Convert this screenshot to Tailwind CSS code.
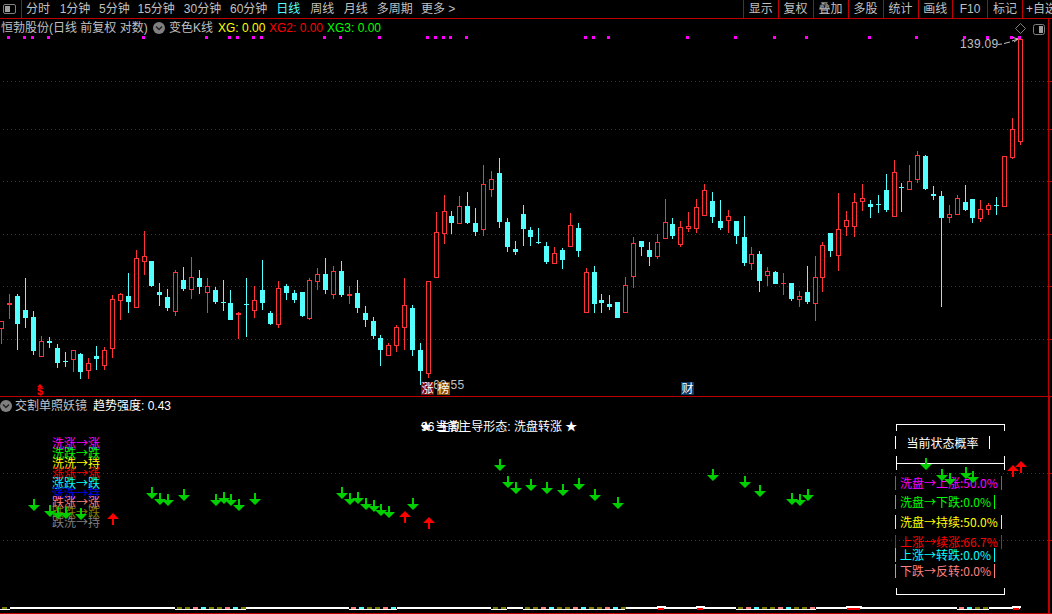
<!DOCTYPE html>
<html lang="zh-CN">

<head>
    <meta charset="UTF-8">
    <title>恒勃股份 日线</title>
    <script src="https://cdn.jsdelivr.net/npm/@tailwindcss/browser@4"></script>
</head>

<body class="bg-black">
    <div class="w-[1052px] h-[614px] bg-black overflow-hidden flex flex-col text-[12px] leading-none text-[#c0c0c0] font-['Liberation_Sans','Noto_Sans_CJK_SC',sans-serif]">

        <!-- toolbar -->
        <div class="h-[19px] shrink-0 flex items-stretch justify-between border-b border-[#c00000]">
            <div class="flex items-center">
                <div class="w-[22px] h-[18px] flex items-center border-r border-[#c00000]">
                    <div class="ml-[3px] w-[13px] h-[10px] rounded-[2px] border border-[#808080] flex justify-start p-px">
                        <div class="w-[5px] bg-[#a0a0a0]"></div>
                    </div>
                </div>
                <div class="flex items-center pl-[4px] whitespace-nowrap">
                    <span class="w-[33.7px]">分时</span>
                    <span class="w-[39.3px]">1分钟</span>
                    <span class="w-[38.5px]">5分钟</span>
                    <span class="w-[46.3px]">15分钟</span>
                    <span class="w-[46.2px]">30分钟</span>
                    <span class="w-[46.4px]">60分钟</span>
                    <span class="w-[33.9px] text-[#54ffff]">日线</span>
                    <span class="w-[33.5px]">周线</span>
                    <span class="w-[32.9px]">月线</span>
                    <span class="w-[44.3px]">多周期</span>
                    <span>更多 &gt;</span>
                </div>
            </div>
            <div class="flex items-stretch whitespace-nowrap">
                <span class="w-[34.5px] flex items-center justify-center border-l border-[#c00000]">显示</span>
                <span class="w-[35px] flex items-center justify-center border-l border-[#c00000]">复权</span>
                <span class="w-[35px] flex items-center justify-center border-l border-[#c00000]">叠加</span>
                <span class="w-[35px] flex items-center justify-center border-l border-[#c00000]">多股</span>
                <span class="w-[35px] flex items-center justify-center border-l border-[#c00000]">统计</span>
                <span class="w-[34.5px] flex items-center justify-center border-l border-[#c00000]">画线</span>
                <span class="w-[35px] flex items-center justify-center border-l border-[#c00000]">F10</span>
                <span class="w-[35px] flex items-center justify-center border-l border-[#c00000]">标记</span>
                <span class="w-[30px] flex items-center pl-[3px] border-l border-[#c00000] overflow-hidden">+自选</span>
            </div>
        </div>

        <!-- main k-line pane -->
        <div class="relative h-[378px] shrink-0 border-b border-[#c00000]">
            <svg id="kline" class="absolute left-0 top-0" width="1052" height="377" viewBox="0 19 1052 377"></svg>

            <div class="relative flex items-center h-[18px] pl-[1px] whitespace-nowrap">
                <span class="w-[146px]">恒勃股份(日线 前复权 对数)</span>
                <svg class="ml-[6px] mr-[4px]" width="12" height="12" viewBox="0 0 12 12">
                    <circle cx="6" cy="6" r="6" fill="#808080" />
                    <path d="M3 4.5 L6 7.5 L9 4.5" fill="none" stroke="#222" stroke-width="1.5" />
                </svg>
                <span class="w-[49px]">变色K线</span>
                <span class="w-[51px] text-[#ffff00]">XG: 0.00</span>
                <span class="w-[58px] text-[#ff0000]">XG2: 0.00</span>
                <span class="text-[#00ff00]">XG3: 0.00</span>
            </div>

            <div class="absolute left-[960px] top-[19px] tracking-[0.3px] whitespace-nowrap">139.09</div>
            <div class="absolute left-[433px] top-[360px] tracking-[0.3px] whitespace-nowrap">63.55</div>

            <div class="absolute left-[421px] top-[363px] w-[13px] h-[13px] bg-[#800808] text-white flex items-center justify-center">涨</div>
            <div class="absolute left-[437px] top-[363px] w-[13px] h-[13px] bg-[#8a5008] text-white flex items-center justify-center">榜</div>
            <div class="absolute left-[681px] top-[363px] w-[13px] h-[13px] bg-[#0a3a66] text-white flex items-center justify-center">财</div>

            <div class="absolute left-[36px] top-[365px] w-[8px] flex flex-col items-center text-[#ff0000]">
                <div class="w-0 h-0 border-x-[3px] border-x-transparent border-b-[3px] border-b-[#ff0000]"></div>
                <div class="text-[11px] font-bold leading-[9px]">$</div>
            </div>
        </div>

        <!-- indicator pane -->
        <div class="relative flex-1 border-b border-[#c00000]">
            <svg id="lower" class="absolute left-0 top-0" width="1052" height="216" viewBox="0 397 1052 216"></svg>

            <div class="relative flex items-center h-[17px] pl-[0px] whitespace-nowrap">
                <svg class="mr-[3px]" width="12" height="12" viewBox="0 0 12 12">
                    <circle cx="6" cy="6" r="6" fill="#808080" />
                    <path d="M3 4.5 L6 7.5 L9 4.5" fill="none" stroke="#222" stroke-width="1.5" />
                </svg>
                <span class="w-[78px]">交割单照妖镜</span>
                <span class="text-white">趋势强度: 0.43</span>
            </div>

            <!-- legend, rows overlap in the original -->
            <div class="absolute left-[52px] top-[41px] flex flex-col leading-[9.9px] whitespace-nowrap font-['Noto_Sans_CJK_SC',sans-serif]">
                <span class="text-[#ff00ff]">洗涨→涨</span>
                <span class="text-[#00ff00]">洗跌→跌</span>
                <span class="text-[#ffff00]">洗洗→持</span>
                <span class="text-[#ff0000]">涨涨→涨</span>
                <span class="text-[#00ffff]">涨跌→跌</span>
                <span class="text-[#0000ff]">涨洗→持</span>
                <span class="text-[#ff8080]">跌涨→涨</span>
                <span class="text-[#808000]">跌跌→跌</span>
                <span class="text-[#808080]">跌洗→持</span>
            </div>

            <!-- two labels printed on top of each other -->
            <div class="absolute left-[420px] top-[24px] text-white whitespace-nowrap">★ 当前主导形态: 洗盘转涨 ★</div>
            <div class="absolute left-[421px] top-[24px] text-white whitespace-nowrap">96 主割</div>

            <!-- probability box -->
            <div class="absolute left-[895px] top-[27px] w-[110px] flex flex-col items-start text-white whitespace-nowrap font-['Noto_Sans_CJK_SC',sans-serif]">
                <div class="ml-px w-[109px] h-[7px] border-t border-x border-white"></div>
                <div class="mt-[5px] h-[13px] flex items-center px-[10.5px] border-x border-white">当前状态概率</div>
                <div class="mt-[7px] ml-px w-[109px] h-[14px] flex items-center border-x border-white">
                    <div class="w-full h-px bg-white"></div>
                </div>
                <div class="mt-[6px] h-[14px] w-[107px] flex items-center pl-[4px] border-x border-[#ff00ff] text-[#ff00ff]">洗盘→上涨:50.0%</div>
                <div class="mt-[5px] h-[14px] w-[100px] flex items-center pl-[4px] border-x border-[#00ff00] text-[#00ff00]">洗盘→下跌:0.0%</div>
                <div class="mt-[6px] h-[14px] w-[107px] flex items-center pl-[4px] border-x border-[#ffff00] text-[#ffff00]">洗盘→持续:50.0%</div>
                <div class="mt-[6px] h-[14px] w-[107px] flex items-center pl-[4px] border-x border-[#ff0000] text-[#ff0000]">上涨→续涨:66.7%</div>
                <div class="mt-[-1px] h-[14px] w-[100px] flex items-center pl-[4px] border-x border-[#00ffff] text-[#00ffff]">上涨→转跌:0.0%</div>
                <div class="mt-[2px] h-[14px] w-[100px] flex items-center pl-[4px] border-x border-[#ff8080] text-[#ff8080]">下跌→反转:0.0%</div>
                <div class="mt-[10px] ml-px w-[109px] h-[7px] border-b border-x border-white"></div>
            </div>

            <svg id="signals" class="absolute left-0 top-0" width="1052" height="216" viewBox="0 397 1052 216"></svg>
        </div>
    </div>

    <script>
        const RED = '#ff3333';
        const CYAN = '#54ffff';

        // [x, wick top, body top, body bottom, wick bottom, r/c] measured on 3x crops
        const left = [
            [4,273,273,296,342,'r'],[28,192,219,225,267,'r'],[52,192,198,282,360,'c'],[76,144,240,264,294,'c'],
            [100,243,261,363,375,'c'],[124,318,333,381,381,'r'],[148,321,333,339,354,'c'],[172,342,354,399,414,'c'],
            [196,366,393,396,411,'c'],[220,360,360,390,426,'r'],[241,369,372,426,447,'c'],[265,384,399,423,447,'r'],
            [289,348,378,387,420,'c'],[313,351,360,408,420,'r'],[337,195,207,357,384,'r'],[361,189,192,213,270,'r'],
            [385,129,198,216,249,'c'],[409,60,84,234,234,'r'],[433,3,78,96,135,'r'],[455,93,93,168,171,'c'],
            [478,159,186,195,228,'c'],[502,177,201,234,243,'c'],[526,120,126,246,258,'r'],[550,111,150,177,183,'c'],
            [574,81,141,180,207,'r'],[598,120,144,171,192,'c'],[622,144,168,189,249,'r'],[646,171,180,216,222,'c'],
            [670,150,216,219,243,'c'],[691,180,219,270,270,'c'],[715,246,249,255,327,'r'],[739,144,222,225,321,'c'],
            [763,168,210,243,264,'r'],[787,90,180,219,240,'c'],[811,243,249,282,285,'c'],[835,153,174,285,294,'r'],
            [859,162,168,189,210,'c'],[883,180,189,210,219,'c']
        ];
        const middle = [
            [7,426,426,498,501,'c'],[28,384,390,507,510,'r'],[52,354,372,396,420,'r'],[76,324,372,420,432,'c'],
            [100,348,363,435,447,'r'],[124,333,363,435,441,'c'],[148,408,432,438,462,'r'],[172,390,429,474,489,'c'],
            [196,468,489,510,531,'c'],[220,501,513,558,567,'c'],[241,555,564,600,648,'c'],[265,579,585,618,618,'r'],
            [289,525,531,588,606,'r'],[313,384,465,534,600,'r'],[337,465,474,600,618,'c'],[361,579,600,663,705,'c'],
            [385,393,393,672,684,'r'],[409,186,246,384,384,'r'],[433,135,183,252,282,'r'],[454,183,198,219,252,'c'],
            [478,138,168,222,222,'r'],[502,126,168,219,222,'c'],[526,174,219,246,258,'c'],[550,45,102,240,258,'r'],
            [574,63,87,120,141,'r'],[598,24,69,216,234,'c'],[622,204,216,291,306,'c'],[646,273,297,306,315,'c'],
            [670,165,192,237,288,'c'],[691,231,240,261,288,'c'],[715,234,276,279,282,'c'],[739,276,288,336,342,'c'],
            [763,291,309,342,342,'r'],[787,294,300,330,357,'c'],[811,189,225,291,291,'r'],[835,219,234,303,321,'c'],
            [859,354,366,489,489,'r'],[883,348,366,462,489,'c']
        ];
        const right = [
            [4,432,450,459,489,'c'],[28,435,462,471,480,'c'],[52,456,456,504,504,'c'],[76,381,405,489,489,'r'],
            [100,261,279,381,414,'r'],[124,273,273,291,318,'c'],[148,276,300,321,348,'c'],[172,252,276,321,327,'r'],
            [196,147,216,267,267,'r'],[217,204,222,258,267,'c'],[241,213,231,285,291,'r'],[265,186,228,237,246,'r'],
            [289,147,171,237,249,'r'],[313,102,120,198,198,'r'],[337,126,153,201,219,'c'],[361,150,213,234,240,'c'],
            [385,180,198,213,249,'r'],[409,213,213,258,282,'c'],[433,198,261,339,348,'c'],[454,291,312,342,360,'r'],
            [478,303,312,393,426,'c'],[502,351,363,378,408,'r'],[526,363,366,402,402,'c'],[550,369,399,402,435,'r'],
            [574,399,399,447,453,'c'],[598,423,438,450,471,'r'],[622,348,426,456,462,'c'],[646,318,381,462,513,'r'],
            [667,276,285,384,426,'r'],[691,249,249,303,321,'c'],[715,129,237,318,363,'r'],[739,183,210,231,258,'r'],
            [763,129,156,231,261,'r'],[787,102,144,156,183,'r'],[811,150,162,171,204,'c'],[835,135,162,165,189,'c'],
            [859,72,120,180,186,'c'],[883,30,66,201,201,'r'],[904,99,111,114,186,'c'],[928,45,93,120,120,'r'],
            [952,3,15,90,99,'r'],[976,15,18,117,120,'c'],[1000,108,132,138,150,'c'],[1024,123,138,204,471,'c'],
            [1048,165,192,204,219,'r'],[1072,135,144,195,195,'r'],[1096,105,156,180,183,'c'],[1117,147,147,204,219,'c'],
            [1141,150,177,207,216,'r'],[1165,159,165,180,195,'r'],[1189,141,165,168,195,'c'],[1213,18,18,171,171,'r']
        ];
        // last two candles come from the crop at (900,20)
        const last = [[337,294,327,414,417,'r'],[361,57,57,366,375,'r']];

        function candle(ox, oy, c) {
            const x = Math.floor(ox + c[0] / 3);
            const y = v => Math.round(oy + v / 3);
            const color = c[5] === 'r' ? RED : CYAN;
            const top = y(c[1]), bt = y(c[2]), bb = y(c[3]), low = y(c[4]);
            let s = '';
            if (bt > top) s += `<rect x="${x}" y="${top}" width="1" height="${bt - top}" fill="${color}"/>`;
            if (low > bb) s += `<rect x="${x}" y="${bb}" width="1" height="${low - bb}" fill="${color}"/>`;
            if (c[5] === 'c' || bb - bt < 3) {
                s += `<rect x="${x - 2}" y="${bt}" width="5" height="${Math.max(bb - bt, 1)}" fill="${color}"/>`;
            } else {
                s += `<rect x="${x - 1.5}" y="${bt + 0.5}" width="4" height="${bb - bt - 1}" fill="#000" stroke="${color}"/>`;
            }
            return s;
        }

        function dotted(y) {
            return `<line x1="3" x2="1048" y1="${y + 0.5}" y2="${y + 0.5}" stroke="#8c1010" stroke-dasharray="1 3"/>`
                + `<rect x="1049" y="${y}" width="3" height="1" fill="#c00000"/>`;
        }

        function arrow(x, y, color, up) {
            const pts = up
                ? [[x, y], [x + 6, y + 6], [x + 1, y + 6], [x + 1, y + 12], [x - 1, y + 12], [x - 1, y + 6], [x - 6, y + 6]]
                : [[x - 1, y], [x + 1, y], [x + 1, y + 6], [x + 6, y + 6], [x, y + 12], [x - 6, y + 6], [x - 1, y + 6]];
            return `<polygon points="${pts.map(p => p.join(',')).join(' ')}" fill="${color}"/>`;
        }

        // main pane
        let k = '<g shape-rendering="crispEdges">';
        [81, 129, 181, 234, 286, 339].forEach(y => k += dotted(y));
        k += '<rect x="1048" y="19" width="1" height="377" fill="#c00000"/>';
        left.forEach(c => k += candle(0, 230, c));
        middle.forEach(c => k += candle(300, 150, c));
        right.forEach(c => k += candle(600, 150, c));
        last.forEach(c => k += candle(900, 20, c));
        [8, 24, 32, 48, 143, 206, 229, 237, 253, 261, 324, 340, 379, 427, 435, 443, 450, 466, 585, 593, 608, 687, 735, 774, 806, 869, 916, 964, 987, 1011, 1019]
            .forEach(x => k += `<rect x="${x - 1}" y="36" width="3" height="3" fill="#ff00ff"/>`);
        k += '</g>';
        k += '<path d="M1020.5 23.5 L1025.5 28.5 L1020.5 33.5 L1015.5 28.5 Z" fill="none" stroke="#808080"/>';
        k += '<rect x="1033.5" y="24.5" width="11" height="10" rx="2" fill="none" stroke="#808080"/>';
        k += '<rect x="1039" y="26" width="4" height="7" fill="#a0a0a0"/>';
        k += '<path d="M998 44.5 L1002 44 M1004 43.5 L1010 42 M1012 41 L1018 39 M1013 37.5 L1018 39 L1014 42" fill="none" stroke="#c0c0c0"/>';
        document.getElementById('kline').innerHTML = k;

        // lower pane: grid and the volume strip at the bottom
        let l = '<g shape-rendering="crispEdges">';
        [473, 540].forEach(y => l += dotted(y));
        l += '<rect x="1048" y="397" width="2" height="216" fill="#c00000"/>';
        l += '<rect x="0" y="607" width="1020" height="2" fill="#fff"/>';
        [[0, 10], [175, 246], [349, 397], [491, 507], [523, 625], [736, 816], [957, 989]].forEach(seg => {
            l += `<rect x="${seg[0]}" y="607" width="${seg[1] - seg[0]}" height="3" fill="#000"/>`;
            l += `<rect x="${seg[0]}" y="609" width="${seg[1] - seg[0]}" height="1" fill="#fff"/>`;
            for (let x = seg[0] + 2, i = 0; x < seg[1] - 3; x += 8, i++) {
                const color = ['#808000', '#ff8080', '#54ffff', '#808000'][(i + seg[0]) % 4];
                l += `<rect x="${x}" y="607" width="5" height="2" fill="${color}"/>`;
            }
        });
        [[657, 666], [696, 705], [846, 862], [1012, 1021]].forEach(seg => {
            l += `<rect x="${seg[0]}" y="606" width="${seg[1] - seg[0]}" height="2" fill="#fff"/>`;
            l += `<rect x="${seg[0] + 1}" y="608" width="${seg[1] - seg[0] - 3}" height="2" fill="#ff0000"/>`;
        });
        l += '</g>';
        document.getElementById('lower').innerHTML = l;

        // signal arrows sit above the labels
        const downs = [[34, 499], [50, 505], [58, 507], [66, 507], [81, 508], [152, 487], [160, 493], [168, 494], [184, 489],
            [216, 494], [224, 492], [231, 494], [239, 499], [255, 493], [342, 487], [350, 493], [358, 492], [366, 498], [374, 500],
            [381, 504], [389, 506], [413, 498], [500, 459], [508, 476], [516, 482], [531, 479], [547, 482], [563, 484], [579, 478],
            [595, 489], [618, 497], [713, 469], [745, 476], [760, 485], [792, 493], [800, 494], [808, 489], [926, 458], [942, 469],
            [950, 473], [966, 467], [973, 471]];
        const ups = [[113, 513], [405, 511], [429, 517], [1013, 465], [1021, 461]];
        let a = '';
        downs.forEach(p => a += arrow(p[0], p[1], '#00d000', false));
        ups.forEach(p => a += arrow(p[0], p[1], '#ff0000', true));
        document.getElementById('signals').innerHTML = a;
    </script>
</body>

</html>
